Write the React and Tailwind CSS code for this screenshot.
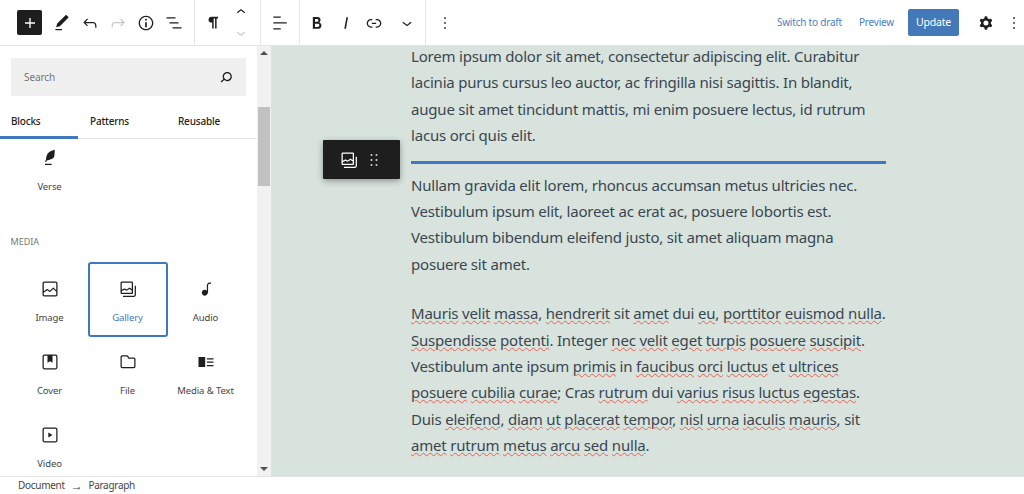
const Icon = ({ d, size = 20, className = "" }) => (
  <svg width={size} height={size} viewBox="0 0 24 24" fill="currentColor" fillRule="evenodd" className={className}>
    <path d={d} />
  </svg>
);

const icons = {
  plus: "M18 11.2h-5.2V6h-1.6v5.2H6v1.6h5.2V18h1.6v-5.2H18z",
  pencil: "M20.1 5.1L16.9 2 6.2 12.7l-1.3 4.4 4.5-1.3L20.1 5.1zM4 20.8h8v-1.5H4v1.5z",
  undo: "M18.3 11.7c-.6-.6-1.4-.9-2.3-.9H6.7l2.9-3.3-1.1-1-4.5 5L8.5 16l1-1-2.7-2.7H16c.5 0 .9.2 1.3.5 1 1 1 3.4 1 4.5v.3h1.5v-.2c0-1.5 0-4.3-1.5-5.7z",
  redo: "M15.6 6.5l-1.1 1 2.9 3.3H8c-.9 0-1.7.3-2.3.9-1.4 1.5-1.4 4.2-1.4 5.6v.2h1.5v-.3c0-1.1 0-3.5 1-4.5.3-.3.7-.5 1.3-.5h9.2L14.5 15l1.1 1.1 4.6-4.6-4.6-5z",
  info: "M12 3.2c-4.8 0-8.8 3.9-8.8 8.8 0 4.8 3.9 8.8 8.8 8.8 4.8 0 8.8-3.9 8.8-8.8 0-4.8-4-8.8-8.8-8.8zm0 16c-4 0-7.2-3.3-7.2-7.2C4.8 8 8 4.8 12 4.8s7.2 3.3 7.2 7.2c0 4-3.2 7.2-7.2 7.2zM11 17h2v-6h-2v6zm0-8h2V7h-2v2z",
  list: "M13.8 5.2H3v1.5h10.8V5.2zm-3.6 12v1.5H21v-1.5H10.2zm7.2-6H6.6v1.5h10.8v-1.5z",
  pilcrow: "M10 11.5h1v7h1.8v-12h1.7v12h1.8v-12H18V4.6h-7.5C8.2 4.6 6.6 6 6.6 8s1.5 3.5 3.4 3.5z",
  up: "M6.5 12.4L12 8l5.5 4.4-.9 1.2L12 10l-4.5 3.6-1-1.2z",
  down: "M17.5 11.6L12 16l-5.5-4.4.9-1.2L12 14l4.5-3.6 1 1.2z",
  align: "M4 19.8h8.9v-1.5H4v1.5zm8.9-15.6H4v1.5h8.9V4.2zm-8.9 7v1.5h16v-1.5H4z",
  bold: "M14.7 11.3c1-.6 1.5-1.6 1.5-3 0-2.3-1.3-3.4-4-3.4H7v14h5.8c1.4 0 2.5-.3 3.3-1 .8-.7 1.2-1.7 1.2-2.9.1-1.9-.8-3.1-2.6-3.7zm-5.1-4h2.3c.6 0 1.1.1 1.4.4.3.3.5.7.5 1.2s-.2 1-.5 1.2c-.3.3-.8.4-1.4.4H9.6V7.3zm4.6 9c-.4.3-1 .4-1.7.4H9.6v-3.9h2.9c.7 0 1.3.2 1.7.5.4.3.6.8.6 1.5s-.2 1.2-.6 1.5z",
  italic: "M12.5 5L10 19h1.9l2.5-14z",
  link: "M15.6 7.2H14v1.5h1.6c2 0 3.7 1.7 3.7 3.7s-1.7 3.7-3.7 3.7H14v1.5h1.6c2.8 0 5.2-2.3 5.2-5.2 0-2.9-2.3-5.2-5.2-5.2zM4.7 12.4c0-2 1.7-3.7 3.7-3.7H10V7.2H8.4c-2.9 0-5.2 2.3-5.2 5.2 0 2.9 2.3 5.2 5.2 5.2H10v-1.5H8.4c-2 0-3.7-1.7-3.7-3.7zm4.6.9h5.3v-1.5H9.3v1.5z",
  dots: "M13 19h-2v-2h2v2zm0-6h-2v-2h2v2zm0-6h-2V5h2v2z",
  cog: "M10.289 4.836A1 1 0 0111.275 4h1.306a1 1 0 01.987.836l.244 1.466c.787.26 1.503.679 2.108 1.218l1.393-.522a1 1 0 011.216.437l.653 1.13a1 1 0 01-.23 1.273l-1.148.944a6.025 6.025 0 010 2.435l1.149.946a1 1 0 01.23 1.272l-.653 1.13a1 1 0 01-1.216.437l-1.394-.522c-.605.54-1.32.958-2.108 1.218l-.244 1.466a1 1 0 01-.987.836h-1.306a1 1 0 01-.986-.836l-.244-1.466a5.995 5.995 0 01-2.108-1.218l-1.394.522a1 1 0 01-1.217-.436l-.653-1.131a1 1 0 01.23-1.272l1.149-.946a6.026 6.026 0 010-2.435l-1.148-.944a1 1 0 01-.23-1.272l.653-1.131a1 1 0 011.217-.437l1.393.522a5.994 5.994 0 012.108-1.218l.244-1.466zM14.929 12a3 3 0 11-6 0 3 3 0 016 0z",
  search: "M13.5 6C10.5 6 8 8.5 8 11.5c0 1.1.3 2.1.9 3l-3.4 3 1 1.1 3.4-2.9c1 .9 2.2 1.4 3.6 1.4 3 0 5.5-2.5 5.5-5.5C19 8.5 16.5 6 13.5 6zm0 9.5c-2.2 0-4-1.8-4-4s1.8-4 4-4 4 1.8 4 4-1.8 4-4 4z",
  verse: "M17.8 2l-.9.3c-.1 0-3.6 1-5.2 2.1C10 5.5 9.3 6.5 8.9 7.1c-.6.9-1.7 4.7-1.7 6.3l-.9 2.3c-.2.4 0 .8.4 1 .1 0 .2.1.3.1.3 0 .6-.2.7-.5l.6-1.5c.3 0 .7-.1 1.2-.2.7-.1 1.4-.3 2.2-.5.8-.2 1.6-.5 2.4-.8.7-.3 1.4-.7 1.9-1.2s.8-1.2 1-1.9c.2-.7.3-1.6.4-2.4.1-.8.1-1.7.2-2.5 0-.8.1-1.5.2-2.1V2zM6 20.5h8V19H6z",
  image: "M19 3H5c-1.1 0-2 .9-2 2v14c0 1.1.9 2 2 2h14c1.1 0 2-.9 2-2V5c0-1.1-.9-2-2-2zM5 4.5h14c.3 0 .5.2.5.5v8.4l-3-2.9c-.3-.3-.8-.3-1 0L11.9 14 9 12c-.3-.2-.6-.2-.8 0l-3.6 2.6V5c-.1-.3.1-.5.4-.5zm14 15H5c-.3 0-.5-.2-.5-.5v-2.4l4.1-3 3 1.9c.3.2.7.2.9-.1L16 12l3.5 3.4V19c0 .3-.2.5-.5.5z",
  gallery: "M16.375 4.5H4.625a.125.125 0 0 0-.125.125v8.254l2.859-1.54a.75.75 0 0 1 .68-.016l2.384 1.142 2.89-2.074a.75.75 0 0 1 .874 0l2.313 1.66V4.625a.125.125 0 0 0-.125-.125Zm.125 9.398-2.75-1.975-2.813 2.02a.75.75 0 0 1-.76.067l-2.444-1.17L4.5 14.583v1.792c0 .069.056.125.125.125h11.75a.125.125 0 0 0 .125-.125v-2.477ZM4.625 3C3.728 3 3 3.728 3 4.625v11.75C3 17.273 3.728 18 4.625 18h11.75c.898 0 1.625-.727 1.625-1.625V4.625C18 3.728 17.273 3 16.375 3H4.625ZM20 8v11c0 .69-.31 1-.999 1H6v1.5h13.001c1.52 0 2.499-.982 2.499-2.5V8H20Z",
  audio: "M17.7 4.3c-1.2 0-2.8 0-3.8 1-.6.6-.9 1.5-.9 2.6V14c-.6-.6-1.5-1-2.5-1C8.6 13 7 14.6 7 16.5S8.6 20 10.5 20c1.5 0 2.8-1 3.3-2.3.5-.8.7-1.8.7-2.7V7.9c0-.7.2-1.2.5-1.6.6-.6 1.8-.6 2.8-.6h.3V4.3h-.4z",
  cover: "M18.7 3H5.3C4 3 3 4 3 5.3v13.4C3 20 4 21 5.3 21h13.4c1.3 0 2.3-1 2.3-2.3V5.3C21 4 20 3 18.7 3zm.8 15.7c0 .4-.4.8-.8.8H5.3c-.4 0-.8-.4-.8-.8V5.3c0-.4.4-.8.8-.8H9V13l3-2 3 2V4.5h3.7c.4 0 .8.4.8.8v13.4z",
  file: "M13.46 6.5a.5.5 0 0 1-.462-.31l-.445-1.084A2 2 0 0 0 10.763 4H5a2 2 0 0 0-2 2v11.5a2 2 0 0 0 2 2h14a2 2 0 0 0 2-2v-9a2 2 0 0 0-2-2h-5.54ZM12.848 8H19a.5.5 0 0 1 .5.5v9a.5.5 0 0 1-.5.5H5a.5.5 0 0 1-.5-.5V6a.5.5 0 0 1 .5-.5h5.763a.5.5 0 0 1 .448.276l.723 1.63a1 1 0 0 0 .914.594Z",
  mediaText: "M3 6h8v12H3V6zm10 1.5h8V9h-8V7.5zm0 4h8V13h-8v-1.5zm0 4h8V17h-8v-1.5z",
  video: "M18.7 3H5.3C4 3 3 4 3 5.3v13.4C3 20 4 21 5.3 21h13.4c1.3 0 2.3-1 2.3-2.3V5.3C21 4 20 3 18.7 3zm.8 15.7c0 .4-.4.8-.8.8H5.3c-.4 0-.8-.4-.8-.8V5.3c0-.4.4-.8.8-.8h13.4c.4 0 .8.4.8.8v13.4zM10 15l5-3-5-3v6z",
  drag: "M8 7h2V5H8v2zm0 6h2v-2H8v2zm0 6h2v-2H8v2zm6-14v2h2V5h-2zm0 8h2v-2h-2v2zm0 6h2v-2h-2v2z",
};

const ToolButton = ({ d, muted }) => (
  <div className={`w-7 flex justify-center ${muted ? "text-[#c9c9c9]" : "text-[#1e1e1e]"}`}>
    <Icon d={d} />
  </div>
);

const Divider = () => <div className="w-px self-stretch bg-[#e8e8e8]" />;

const Tile = ({ d, label, selected }) => (
  <div
    className={`h-[73px] flex flex-col items-center pt-[16px] rounded-[2px] ${
      selected ? "outline-2 -outline-offset-1 outline-[#3f78c0]" : ""
    } text-[#1e1e1e]`}
  >
    <Icon d={d} />
    <span className={`mt-[12px] text-[9.5px] tracking-[-0.1px] leading-[14px] ${selected ? "text-[#3f78c0]" : "text-[#444]"}`}>{label}</span>
  </div>
);

const W = ({ children }) => (
  <span className="underline decoration-wavy decoration-[#e8604f] decoration-1 underline-offset-[1px]">{children}</span>
);

const Line = ({ children }) => <div className="whitespace-nowrap h-[26.4px]">{children}</div>;

export default function App() {
  return (
    <div className="h-[494px] w-[1024px] overflow-hidden flex flex-col bg-white font-['Noto_Sans',sans-serif] text-[#1e1e1e]">
      <header className="h-[46px] shrink-0 flex items-stretch border-b border-[#e4e4e4]">
        <div className="flex items-center pl-[17px] pr-[6px]">
          <div className="w-[25px] h-[25px] mr-[6px] bg-[#1e1e1e] text-white rounded-[2px] flex items-center justify-center">
            <Icon d={icons.plus} />
          </div>
          <ToolButton d={icons.pencil} />
          <ToolButton d={icons.undo} />
          <ToolButton d={icons.redo} muted />
          <ToolButton d={icons.info} />
          <ToolButton d={icons.list} />
        </div>
        <Divider />
        <div className="flex items-center pl-[4px] pr-[5px]">
          <ToolButton d={icons.pilcrow} />
          <div className="w-7 flex flex-col items-center gap-[3px]">
            <Icon d={icons.up} size={18} />
            <Icon d={icons.down} size={18} className="text-[#c9c9c9]" />
          </div>
        </div>
        <Divider />
        <div className="flex items-center pl-[5px] pr-[5px]">
          <ToolButton d={icons.align} />
        </div>
        <Divider />
        <div className="flex items-center pl-[3px] pr-[4px]">
          <ToolButton d={icons.bold} />
          <div className="w-px" />
          <ToolButton d={icons.italic} />
          <ToolButton d={icons.link} />
          <div className="w-[5px]" />
          <ToolButton d={icons.down} />
        </div>
        <Divider />
        <div className="flex items-center pl-[5px]">
          <ToolButton d={icons.dots} />
        </div>
        <div className="ml-auto flex items-center">
          <span className="text-[10px] tracking-[-0.2px] text-[#4a80c4]">Switch to draft</span>
          <span className="ml-[17px] text-[10px] tracking-[-0.2px] text-[#4a80c4]">Preview</span>
          <div className="ml-[14px] w-[51px] h-[27px] bg-[#4379b8] text-white text-[10.5px] tracking-[-0.2px] rounded-[2px] flex items-center justify-center">
            Update
          </div>
          <div className="ml-[13px] w-7 flex justify-center text-[#1e1e1e]">
            <Icon d={icons.cog} />
          </div>
          <div className="ml-1 w-5 flex justify-center text-[#1e1e1e]">
            <Icon d={icons.dots} />
          </div>
        </div>
      </header>

      <div className="flex-1 min-h-0 flex">
        <aside className="w-[257px] shrink-0 flex flex-col overflow-hidden">
          <div className="px-[11px] pt-[12px]">
            <div className="h-[38px] bg-[#f0f0f0] flex items-center justify-between pl-[13px] pr-[10px] text-[#1e1e1e]">
              <span className="text-[10px] tracking-[-0.1px] pt-px text-[#757575]">Search</span>
              <Icon d={icons.search} size={20} />
            </div>
          </div>
          <div className="mt-[12px] h-[31px] shrink-0 flex border-b border-[#e4e4e4] text-[10px] tracking-[-0.2px] font-medium">
            <div className="w-[78px] pl-[11px] pb-[2px] flex items-center border-b-[3px] border-[#3f78c0] -mb-px">Blocks</div>
            <div className="w-[100px] pl-[12px] pb-[4px] flex items-center">Patterns</div>
            <div className="flex items-center pb-[4px]">Reusable</div>
          </div>
          <div className="flex-1 min-h-0 overflow-hidden px-[10.5px]">
            <div className="-mt-[7px] grid grid-cols-[78px_78px_78px]">
              <Tile d={icons.verse} label="Verse" />
            </div>
            <div className="mt-[30px] text-[9px] text-[#757575]">MEDIA</div>
            <div className="mt-[14px] grid grid-cols-[78px_78px_78px]">
              <Tile d={icons.image} label="Image" />
              <Tile d={icons.gallery} label="Gallery" selected />
              <Tile d={icons.audio} label="Audio" />
              <Tile d={icons.cover} label="Cover" />
              <Tile d={icons.file} label="File" />
              <Tile d={icons.mediaText} label="Media & Text" />
              <Tile d={icons.video} label="Video" />
            </div>
          </div>
        </aside>

        <div className="w-[14px] shrink-0 bg-[#f1f1f1] flex flex-col items-center py-[5px]">
          <div className="w-0 h-0 border-x-[4px] border-x-transparent border-b-[4px] border-b-[#505050]" />
          <div className="mt-[52px] w-[12px] h-[79px] bg-[#c1c1c1]" />
          <div className="mt-auto w-0 h-0 border-x-[4px] border-x-transparent border-t-[4px] border-t-[#505050]" />
        </div>

        <main className="relative flex-1 min-w-0 overflow-hidden bg-[#d7e3dc] pl-[140px] text-[15px] tracking-[-0.2px] leading-[26.4px] text-[#3b4652]">
          <div className="-mt-[3px]">
            <Line>Lorem ipsum dolor sit amet, consectetur adipiscing elit. Curabitur</Line>
            <Line>lacinia purus cursus leo auctor, ac fringilla nisi sagittis. In blandit,</Line>
            <Line>augue sit amet tincidunt mattis, mi enim posuere lectus, id rutrum</Line>
            <Line>lacus orci quis elit.</Line>
          </div>
          <div className="mt-[12px] mb-[8px] w-[475px] h-[3px] bg-[#3f78c0]" />
          <div>
            <Line>Nullam gravida elit lorem, rhoncus accumsan metus ultricies nec.</Line>
            <Line>Vestibulum ipsum elit, laoreet ac erat ac, posuere lobortis est.</Line>
            <Line>Vestibulum bibendum eleifend justo, sit amet aliquam magna</Line>
            <Line>posuere sit amet.</Line>
          </div>
          <div className="mt-[23px]">
            <Line>
              <W>Mauris</W> <W>velit</W> <W>massa</W>, <W>hendrerit</W> sit <W>amet</W> dui <W>eu</W>, <W>porttitor</W> <W>euismod</W> <W>nulla</W>.
            </Line>
            <Line>
              <W>Suspendisse</W> <W>potenti</W>. Integer <W>nec</W> <W>velit</W> <W>eget</W> <W>turpis</W> <W>posuere</W> <W>suscipit</W>.
            </Line>
            <Line>
              Vestibulum ante ipsum <W>primis</W> in <W>faucibus</W> <W>orci</W> <W>luctus</W> et <W>ultrices</W>
            </Line>
            <Line>
              <W>posuere</W> <W>cubilia</W> <W>curae</W>; Cras <W>rutrum</W> dui <W>varius</W> <W>risus</W> <W>luctus</W> <W>egestas</W>.
            </Line>
            <Line>
              Duis <W>eleifend</W>, <W>diam</W> <W>ut</W> <W>placerat</W> <W>tempor</W>, <W>nisl</W> <W>urna</W> <W>iaculis</W> <W>mauris</W>, sit
            </Line>
            <Line>
              <W>amet</W> <W>rutrum</W> <W>metus</W> <W>arcu</W> <W>sed</W> <W>nulla</W>.
            </Line>
          </div>

          <div className="absolute left-[52px] top-[94px] w-[77px] h-[39px] bg-[#1e1e1e] text-white rounded-[1px] shadow-[0_2px_6px_rgba(0,0,0,0.35)] flex items-center justify-center gap-[5px]">
            <Icon d={icons.gallery} />
            <Icon d={icons.drag} />
          </div>
        </main>
      </div>

      <footer className="h-[18px] shrink-0 border-t border-[#e4e4e4] pl-[18px] flex items-center text-[10px] tracking-[-0.3px] text-[#444]">
        Document
        <span className="mx-[6px] text-[12px] font-['Liberation_Sans',sans-serif]">→</span>
        Paragraph
      </footer>
    </div>
  );
}
